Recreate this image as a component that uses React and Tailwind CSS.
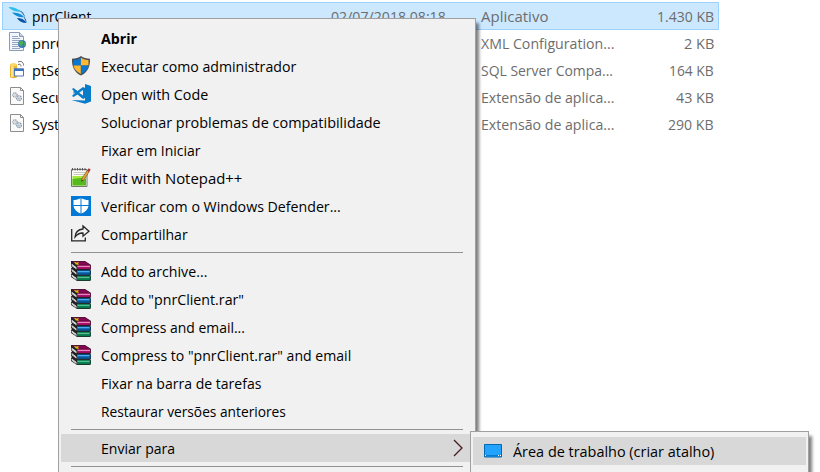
import { useLayoutEffect, useRef, useState } from 'react';

// Text run condensed horizontally so that it fills the given width.
function Label({ children, width, className = '' }) {
  const ref = useRef(null);
  const [scale, setScale] = useState(1);
  useLayoutEffect(() => {
    setScale(width / ref.current.offsetWidth);
  }, [children, width]);
  return (
    <span className={`flex shrink-0 ${className}`} style={{ width }}>
      <span ref={ref} className="shrink-0 origin-left whitespace-pre" style={{ transform: `scaleX(${scale})` }}>
        {children}
      </span>
    </span>
  );
}

function Bird() {
  return (
    <svg viewBox="0 0 20 20" className="size-5">
      <path d="M.5 1C5 .8 10 2.2 13 5.8C8.5 6 3.5 4.8.5 1Z" fill="#2fc0e8" />
      <path d="M4 6.5C8 6.5 13 7 16 11.3C11 11.6 7 10 4 6.5Z" fill="#0d8ed6" />
      <path d="M9 12C12 12 16 12.5 18.5 17C14 17 11 15.5 9 12Z" fill="#0b55a8" />
      <path d="M11 4C14.5 5.5 16.8 8 17 12C15.8 9 14 6.5 11 4Z" fill="#16539c" />
      <path d="M15.5 10.5C17.5 12 18.5 14 18.5 17C17.5 14.5 16.5 12.5 15.5 10.5Z" fill="#123c78" />
    </svg>
  );
}

function ConfigFile() {
  return (
    <svg viewBox="0 0 20 20" className="mb-[3px] size-5">
      <path d="M1.5.5h10l4 4v14h-14z" fill="#f3f7fd" stroke="#8b9bb4" />
      <path d="M11.5.5v4h4" fill="#c6d3e6" stroke="#8b9bb4" />
      <path d="M4 4.5h6M4 6.5h8M4 8.5h9M4 10.5h7M4 12.5h6M4 14.5h6M4 16.5h8" stroke="#94a6c6" />
      <circle cx="14" cy="12" r="4" fill="#3f77b5" />
      <path d="M11 9.5l3-1.3 1.3 2.5-1.8 4-2.8-2.6zM16 10.5l2 .5-1.6 3.5z" fill="#4bae50" />
    </svg>
  );
}

function SetupFile() {
  return (
    <svg viewBox="0 0 20 20" className="mb-0.5 size-5">
      <path d="M2 5c0-2 7-2 7 0v12c0 1.5-7 1.5-7 0z" fill="#edb22c" />
      <path d="M3 6h2.5v11H3z" fill="#ffe591" />
      <ellipse cx="5.5" cy="5" rx="3.5" ry="1.4" fill="#ffd766" />
      <path d="M6.5 9h9v7h-9z" fill="#fff" stroke="#5277b5" />
      <path d="M6 8.5h10V11H6z" fill="#3b72c4" />
      <path d="M10 2c3-1.7 5.8.5 5.5 3.5M10 4.5c2-.8 3 .2 3 2" fill="none" stroke="#666" />
    </svg>
  );
}

function DllFile() {
  return (
    <svg viewBox="0 0 20 20" className="mb-0.5 size-5">
      <path d="M2.5.5h10l3 3v14h-13z" fill="#fafafa" stroke="#8d8d8d" />
      <path d="M12.5.5v3h3" fill="none" stroke="#8d8d8d" />
      <circle cx="7" cy="8" r="2.1" fill="#fff" stroke="#929ba3" strokeWidth="1.3" strokeDasharray="1.3 .5" />
      <circle cx="11" cy="11.2" r="2.3" fill="#e4edf4" stroke="#8798a8" strokeWidth="1.3" strokeDasharray="1.3 .5" />
      <circle cx="7" cy="8" r=".7" fill="#83a0b8" />
      <circle cx="11" cy="11.2" r=".7" fill="#8298ac" />
    </svg>
  );
}

function Shield() {
  return (
    <svg viewBox="0 0 20 20" className="size-5">
      <path d="M10 0C7.5 1.9 4.5 2.7 1 2.7C.8 10 2.7 15.8 10 19.6C17.3 15.8 19.2 10 19 2.7C15.5 2.7 12.5 1.9 10 0Z" fill="#4b5055" />
      <path d="M9.9 1.8C7.5 3.4 5 4 2.5 4.1V9.6h7.4Z" fill="#0878d4" />
      <path d="M9.9 1.8C12.3 3.4 15 4 17.5 4.1V9.6H9.9Z" fill="#ffb831" />
      <path d="M2.5 9.6h7.4v8.3C5.2 15.5 3.1 13 2.5 9.6Z" fill="#ffb831" />
      <path d="M9.9 9.6h7.6C16.9 13 14.8 15.5 9.9 17.9Z" fill="#0878d4" />
    </svg>
  );
}

function Code() {
  return (
    <svg viewBox="0 0 20 20" className="size-5">
      <path d="M14 0l6 2v15.5L14 19.8.5 16l13.5.6z" fill="#087bc9" />
      <path d="M1 5l1.5-1 4 3L12 3l2 1v10l-2 1-5.5-4.5L2.5 13 1 12l3-3.4zM8.2 8.7l3.8 2.8V5.9zM2.6 7v3.4l1.8-1.7z" fill="#087bc9" fillRule="evenodd" />
    </svg>
  );
}

function Notepad() {
  return (
    <svg viewBox="0 0 20 20" className="size-5">
      <path d="M.5 1.5h15.5v17H.5z" fill="#fbfbf3" stroke="#777" />
      <path d="M1.5 0v2.5M4 0v2.5M6.5 0v2.5M9 0v2.5M11.5 0v2.5M14 0v2.5" stroke="#555" />
      <path d="M2.5 4.5h12M2.5 6.5h11" stroke="#c8c8c0" />
      <path d="M1.5 8h13.5v9.5H1.5z" fill="#a4e838" />
      <path d="M1.5 11l8-1 5.5 1v6.5H1.5z" fill="#55b91f" />
      <path d="M10.5 13.5l.7-3.5 5-7.6 2 1.2-5 7.8z" fill="#eca72c" stroke="#75582c" strokeWidth=".7" />
      <path d="M16 2.8L17.6.3 19.7 1.6 18.1 4z" fill="#bd3030" />
      <path d="M10.5 13.5l.4-1.8 1.2.8z" fill="#333" />
    </svg>
  );
}

function Defender() {
  return (
    <svg viewBox="0 0 20 20" className="size-5">
      <path d="M0 0h20v20H0z" fill="#0078d7" />
      <path d="M9.5 2.2C7.5 3.4 5 4 2.5 4v5h7zM10.5 2.2C12.5 3.4 15 4 17.5 4v5h-7zM2.5 10h7v7.5C5.7 16 3.2 13.5 2.5 10zM10.5 10h7c-.7 3.5-3.2 6-7 7.5z" fill="#fff" />
    </svg>
  );
}

function Share() {
  return (
    <svg viewBox="0 0 20 20" className="size-5">
      <path d="M.7 5v11.8h13.6v-3.3" fill="none" stroke="#262626" strokeWidth="1.3" />
      <path d="M12 5V2l6 5.2-6 5V9C8.3 8.8 6 10.4 4 13c.3-4.2 3.1-7.6 8-8z" fill="none" stroke="#262626" strokeWidth="1.3" />
    </svg>
  );
}

function Books() {
  return (
    <svg viewBox="0 0 20 20" className="size-5">
      <path d="M0 0h14l6 4v4l-.6 1 .6 1v3.5l-.6 1 .6 1V19l-1 1H6L0 16v-3l1-1-1-1V7.5l1-1L0 5z" fill="#222" />
      <path d="M.5.5H14l5.5 3.3H6z" fill="#850653" />
      <path d="M6 4.2h13.5V8H6z" fill="#a00862" />
      <path d="M6.5 4.8h12.5v1.3H6.5z" fill="#e985bd" />
      <path d="M6 9.2h13.5v4.6H6z" fill="#07579c" />
      <path d="M6.5 10h12v1.3h-12z" fill="#4cacec" />
      <path d="M6 14.8h13.5v4.5H6z" fill="#08784e" />
      <path d="M6.5 15.8h12v1.3h-12z" fill="#55bd90" />
      <path d="M.7 2.7l4.7 3.6v2L.7 4.9zM.7 8l4.7 3.7v1.8L.7 10.1zM.7 13.4l4.7 3.7V19L.7 15.6z" fill="#f7f7f7" />
      <path d="M.7 4l4.7 3.5M.7 9.1l4.7 3.6M.7 14.6l4.7 3.5" stroke="#999" strokeWidth=".6" />
      <path d="M3.5 1.2l4 2.2M4.5 3l3-1.5" stroke="#d8cc00" strokeWidth="1.1" />
    </svg>
  );
}

function Desktop() {
  return (
    <svg viewBox="0 0 18 14" className="h-3.5 w-[18px]">
      <path d="M.5.5h17v12.5H.5z" fill="#189fff" stroke="#0669ae" />
      <path d="M1 1h16v10H1z" fill="#22a3ff" />
      <path d="M1 11.5h16" stroke="#087ac8" />
      <path d="M1 11.5h1M14 11.5h1M16 11.5h1" stroke="#fff" />
    </svg>
  );
}

const files = [
  { icon: Bird, name: 'pnrClient', nameW: 60, kind: 'Aplicativo', kindW: 67, size: '1.430 KB', sizeW: 57 },
  { icon: ConfigFile, name: 'pnrC', nameW: 33, kind: 'XML Configuration...', kindW: 133, size: '2 KB', sizeW: 30 },
  { icon: SetupFile, name: 'ptSe', nameW: 30, kind: 'SQL Server Compa...', kindW: 132, size: '164 KB', sizeW: 45 },
  { icon: DllFile, name: 'Secu', nameW: 32, kind: 'Extensão de aplica...', kindW: 133, size: '43 KB', sizeW: 38 },
  { icon: DllFile, name: 'Syst', nameW: 27, kind: 'Extensão de aplica...', kindW: 133, size: '290 KB', sizeW: 46 },
];

const groups = [
  [
    { text: 'Abrir', width: 36, bold: true },
    { text: 'Executar como administrador', width: 195, icon: Shield },
    { text: 'Open with Code', width: 107, icon: Code },
    { text: 'Solucionar problemas de compatibilidade', width: 280 },
    { text: 'Fixar em Iniciar', width: 100 },
    { text: 'Edit with Notepad++', width: 141, icon: Notepad },
    { text: 'Verificar com o Windows Defender...', width: 240, icon: Defender },
    { text: 'Compartilhar', width: 87, icon: Share },
  ],
  [
    { text: 'Add to archive...', width: 106, icon: Books },
    { text: 'Add to "pnrClient.rar"', width: 143, icon: Books },
    { text: 'Compress and email...', width: 144, icon: Books },
    { text: 'Compress to "pnrClient.rar" and email', width: 250, icon: Books },
    { text: 'Fixar na barra de tarefas', width: 160 },
    { text: 'Restaurar versões anteriores', width: 185 },
  ],
  [{ text: 'Enviar para', width: 74, active: true }],
];

function MenuItem({ item }) {
  const Icon = item.icon;
  return (
    <div className={`mx-0.5 flex h-7 items-center gap-2.5 pl-2.5 text-black ${item.active ? 'bg-[#d8d8d8]' : ''}`}>
      <span className="size-5 shrink-0">{Icon && <Icon />}</span>
      <Label width={item.width} className={item.bold ? 'font-bold' : ''}>{item.text}</Label>
      {item.active && (
        <svg viewBox="0 0 12 20" className="mr-[9px] ml-auto h-5 w-3">
          <path d="M2 2l8 8-8 8" fill="none" stroke="#4a1c20" strokeWidth="1.3" />
        </svg>
      )}
    </div>
  );
}

function Separator() {
  return <div className="mx-3 flex h-[9px] items-center"><div className="h-px w-full bg-[#919191]" /></div>;
}

export default function App() {
  return (
    <main className="relative h-[472px] w-[820px] overflow-hidden bg-white font-['Open_Sans','Noto_Sans',sans-serif] text-[15px] leading-5">
      <div className="w-[719px] pt-0.5 pl-0.5">
        {files.map((file, i) => {
          const shift = i === 0 ? '' : 'pb-0.5';
          return (
            <div key={file.name} className={`flex items-center border ${i === 0 ? 'h-7 border-[#99d1ff] bg-[#cce8ff]' : 'h-[27px] border-transparent'}`}>
              <div className="flex w-[327px] items-center gap-1 pl-[5px] text-black">
                <file.icon />
                <Label width={file.nameW} className={shift}>{file.name}</Label>
              </div>
              <div className="w-[151px] pl-px text-[#6d6d6d]">{i === 0 && <Label width={115}>02/07/2018 08:18</Label>}</div>
              <div className="flex grow items-center justify-between pr-1 text-[#6d6d6d]">
                <Label width={file.kindW} className={shift}>{file.kind}</Label>
                <Label width={file.sizeW} className={shift}>{file.size}</Label>
              </div>
            </div>
          );
        })}
      </div>

      <div className="absolute top-[18px] left-[58px] h-[480px] w-[418px] border border-[#a0a0a0] bg-[#f1f1f1] pt-[5px] shadow-[4px_4px_3px_-1px_rgba(0,0,0,0.5)]">
        {groups.map((group, i) => (
          <div key={i}>
            {group.map((item) => <MenuItem key={item.text} item={item} />)}
            <Separator />
          </div>
        ))}
      </div>

      <div className="absolute top-[431px] left-[470px] h-20 w-[339px] border border-[#a0a0a0] bg-[#f1f1f1] px-0.5 pt-[5px] shadow-[4px_4px_3px_-1px_rgba(0,0,0,0.5)]">
        <div className="flex h-7 items-center gap-[11px] bg-[#d8d8d8] pl-[11px] text-black">
          <Desktop />
          <Label width={201}>Área de trabalho (criar atalho)</Label>
        </div>
      </div>
    </main>
  );
}
